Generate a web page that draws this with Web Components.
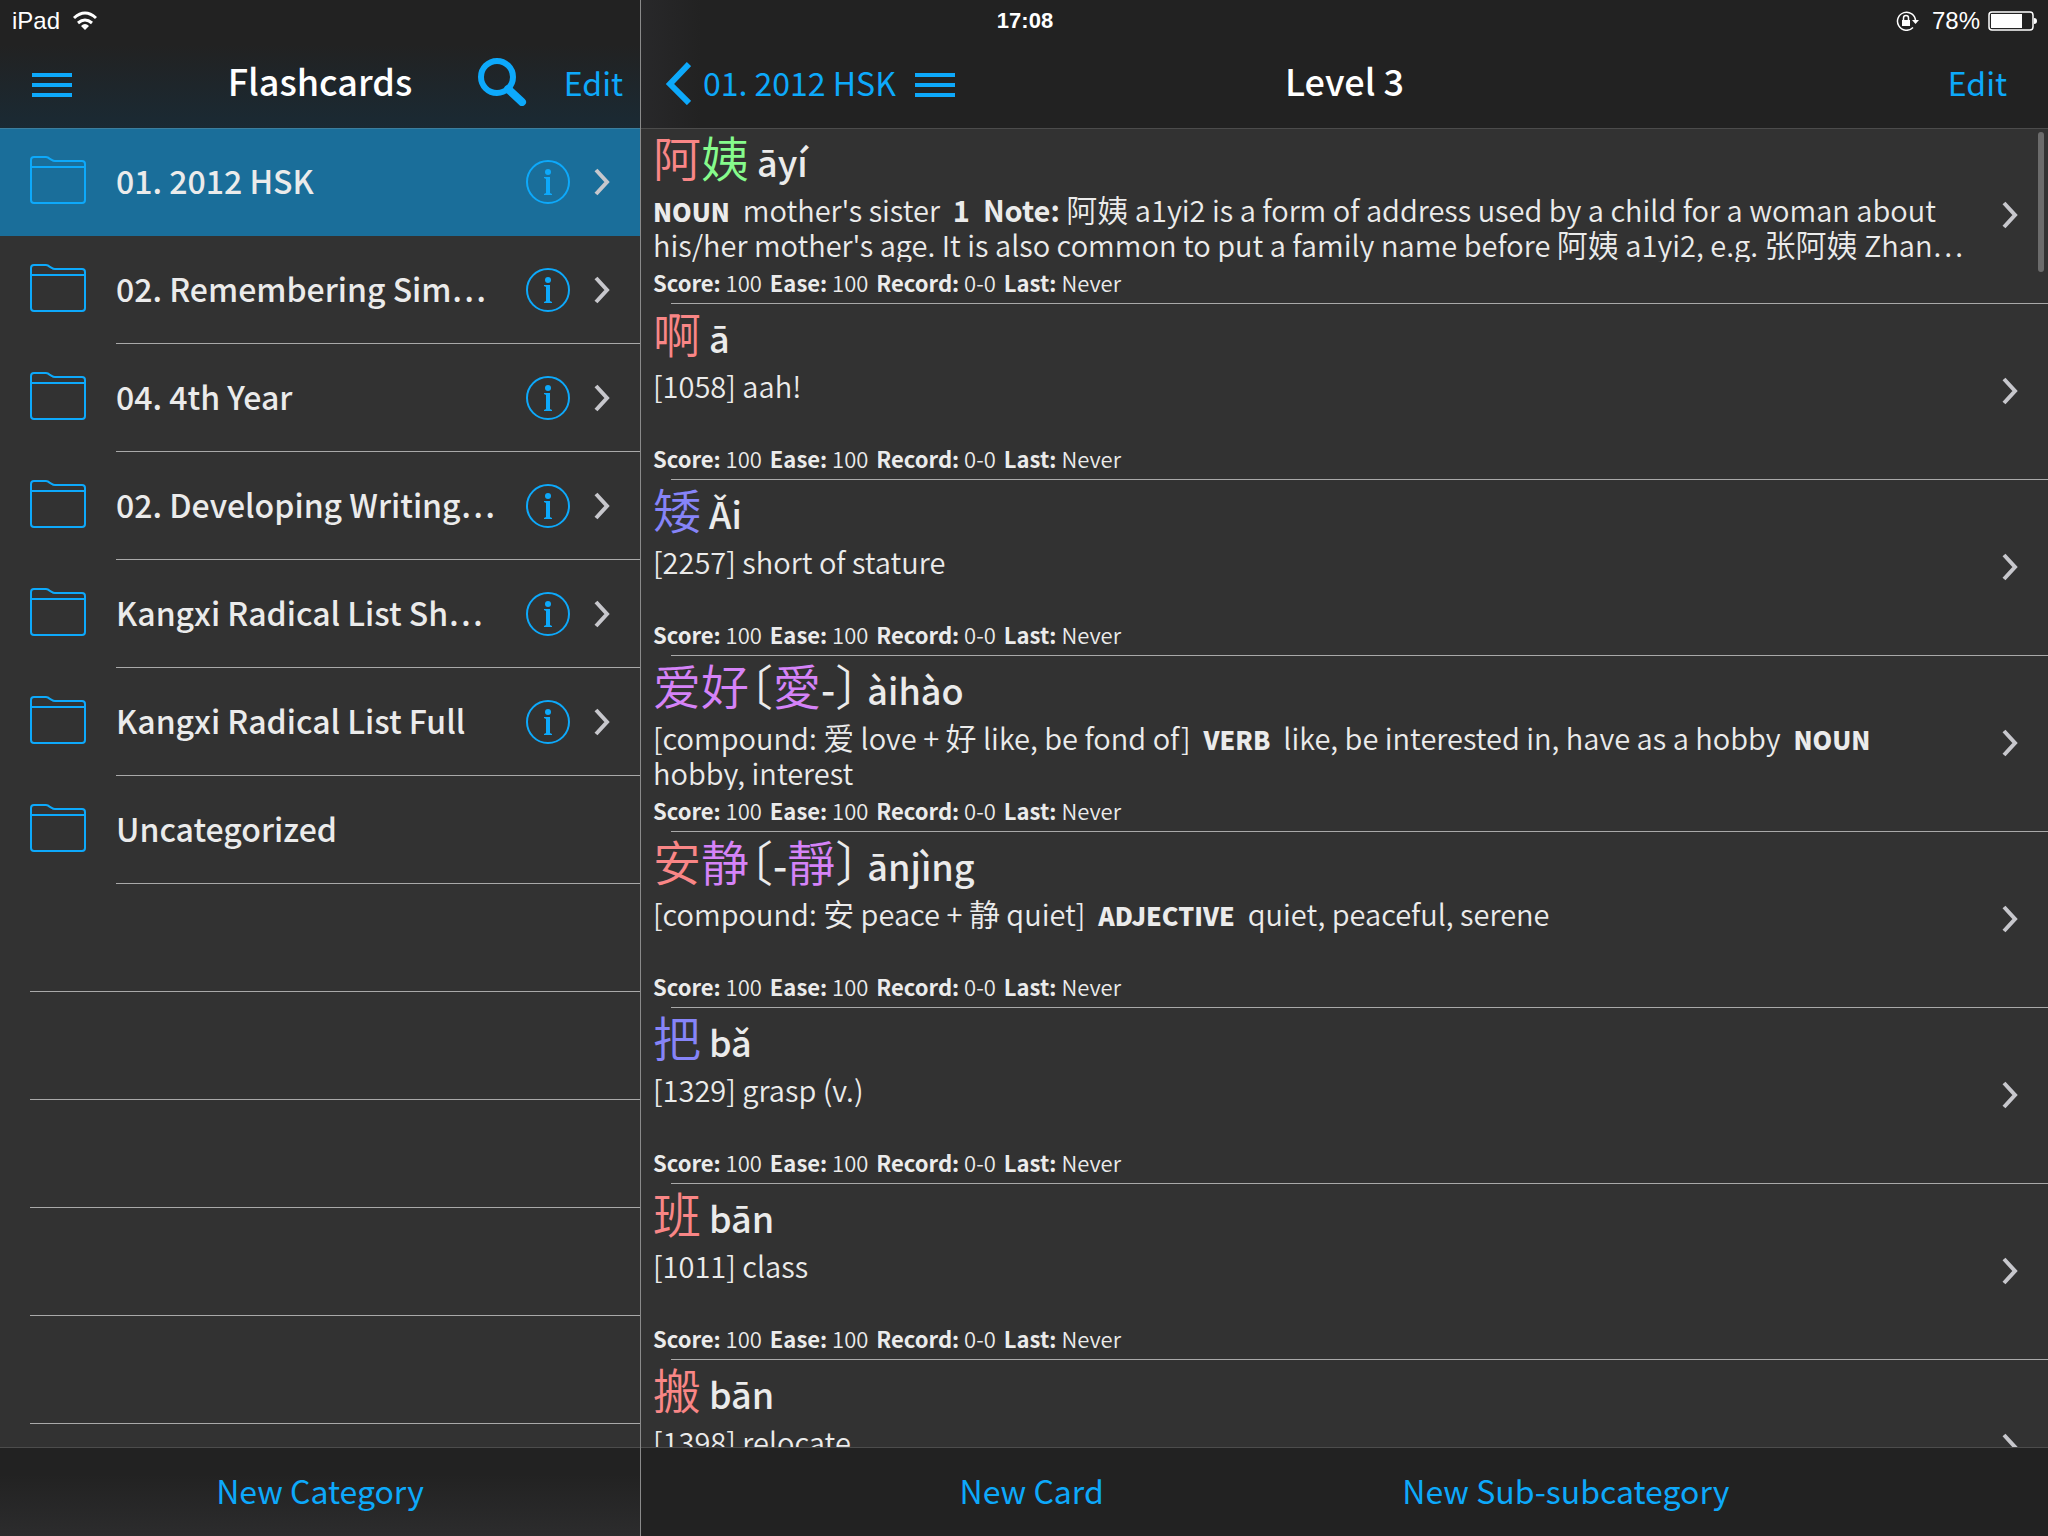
<!DOCTYPE html>
<html lang="en">
<head>
<meta charset="utf-8">
<title>Flashcards</title>
<style>
  html, body {
    height: 100%;
    margin: 0;
  }
  body {
    --bar: #222;
    --page: #323232;
    --blue: #0da9fb;
    --line: #a9a9a9;
    --bar-line: #4c4c4c;
    --text: #ebebeb;
    --tone1: #f98686;
    --tone2: #86fb8c;
    --tone3: #8684f8;
    --tone4: #d583f8;
    background: var(--page);
    color: var(--text);
    font-family: "Noto Sans CJK SC", sans-serif;
    overflow: hidden;
  }
</style>
</head>
<body>
<flash-app>
  <status-bar slot="status"></status-bar>

  <side-panel slot="side">
    <nav-bar slot="top" class="tinted">
      <icon-button slot="start" icon="menu" label="Menu"></icon-button>
      Flashcards
      <icon-button slot="end" icon="search" label="Search"></icon-button>
      <text-button slot="end">Edit</text-button>
    </nav-bar>
    <category-row selected>01. 2012 HSK</category-row>
    <category-row more>02. Remembering Sim</category-row>
    <category-row>04. 4th Year</category-row>
    <category-row more>02. Developing Writing</category-row>
    <category-row more>Kangxi Radical List Sh</category-row>
    <category-row>Kangxi Radical List Full</category-row>
    <category-row plain>Uncategorized</category-row>
    <empty-row></empty-row>
    <empty-row></empty-row>
    <empty-row></empty-row>
    <empty-row></empty-row>
    <empty-row></empty-row>
    <empty-row></empty-row>
    <tool-bar slot="bottom" class="glow">
      <text-button>New Category</text-button>
    </tool-bar>
  </side-panel>

  <card-panel slot="main">
    <nav-bar slot="top" class="wide">
      <back-button slot="start">01. 2012 HSK</back-button>
      <icon-button slot="start" icon="menu" label="Menu"></icon-button>
      Level 3
      <text-button slot="end">Edit</text-button>
    </nav-bar>
    <card-row pinyin="āyí">
      <span slot="hanzi" class="t1">阿</span><span slot="hanzi" class="t2">姨</span>
      <b class="pos">NOUN</b>&nbsp; mother's sister&nbsp; <b>1</b>&nbsp; <b>Note:</b> <span class="zh">阿姨</span> a1yi2 is a form of address used by a child for a woman about his/her mother's age. It is also common to put a family name before <span class="zh">阿姨</span> a1yi2, e.g. <span class="zh">张阿姨</span> Zhan<span class="dots">…</span>
    </card-row>
    <card-row pinyin="ā">
      <span slot="hanzi" class="t1">啊</span>
      [1058] aah!
    </card-row>
    <card-row pinyin="Ǎi">
      <span slot="hanzi" class="t3">矮</span>
      [2257] short of stature
    </card-row>
    <card-row pinyin="àihào">
      <span slot="hanzi" class="t4">爱好</span><span slot="hanzi">〔</span><span slot="hanzi" class="t4">愛</span><span slot="hanzi" class="dash">-</span><span slot="hanzi">〕</span>
      [compound: <span class="zh">爱</span> love + <span class="zh">好</span> like, be fond of]&nbsp; <b class="pos">VERB</b>&nbsp; like, be interested in, have as a hobby&nbsp; <b class="pos">NOUN</b>&nbsp; hobby, interest
    </card-row>
    <card-row pinyin="ānjìng">
      <span slot="hanzi" class="t1">安</span><span slot="hanzi" class="t4">静</span><span slot="hanzi">〔</span><span slot="hanzi" class="dash">-</span><span slot="hanzi" class="t4">靜</span><span slot="hanzi">〕</span>
      [compound: <span class="zh">安</span> peace + <span class="zh">静</span> quiet]&nbsp; <b class="pos">ADJECTIVE</b>&nbsp; quiet, peaceful, serene
    </card-row>
    <card-row pinyin="bǎ">
      <span slot="hanzi" class="t3">把</span>
      [1329] grasp (v.)
    </card-row>
    <card-row pinyin="bān">
      <span slot="hanzi" class="t1">班</span>
      [1011] class
    </card-row>
    <card-row pinyin="bān">
      <span slot="hanzi" class="t1">搬</span>
      [1398] relocate
    </card-row>
    <tool-bar slot="bottom">
      <text-button>New Card</text-button>
      <text-button>New Sub-subcategory</text-button>
    </tool-bar>
  </card-panel>
</flash-app>

<script>
const icons = {
  menu: `<svg width="40" height="30" viewBox="0 0 40 30" fill="currentColor"><path d="M0 6h40v4H0zM0 16h40v4H0zM0 26h40v4H0z"/></svg>`,
  search: `<svg width="50" height="48" viewBox="0 0 50 48" fill="none" stroke="currentColor"><circle cx="20" cy="19" r="16" stroke-width="6"/><path d="M31 31l14 13" stroke-width="8" stroke-linecap="round"/></svg>`,
  back: `<svg width="26" height="46" viewBox="0 0 26 46" fill="none" stroke="currentColor" stroke-width="6"><path d="M24 5L5 25l19 19"/></svg>`,
  chevron: `<svg width="18" height="28" viewBox="0 0 18 28" fill="none" stroke="currentColor" stroke-width="4"><path d="M2 2l11 12L2 26"/></svg>`,
  folder: `<svg width="56" height="48" viewBox="0 0 56 48" fill="none" stroke="currentColor" stroke-width="2"><path d="M1 4q0-3 3-3h12q2 0 4 2l2 1q1 1 3 1h27q3 0 3 3v36q0 3-3 3H4q-3 0-3-3zM1 11h54"/></svg>`,
  info: `<svg width="44" height="44" viewBox="0 0 44 44"><circle cx="22" cy="22" r="21" fill="none" stroke="currentColor" stroke-width="2"/><circle cx="22" cy="12" r="3" fill="currentColor"/><path fill="currentColor" d="M18 17h6v16l2 1v1h-8v-1l2-1V19l-2-1z"/></svg>`,
  wifi: `<svg width="26" height="20" viewBox="0 0 26 20" fill="none" stroke="currentColor" stroke-width="3"><path d="M2 7q11-10 22 0M6 12q7-6 14 0"/><path fill="currentColor" stroke="none" d="M13 19l-4-4q4-4 8 0z"/></svg>`,
  lock: `<svg width="28" height="20" viewBox="0 0 28 20" fill="none" stroke="currentColor"><path d="M17 16.500a9 9 0 1 1 2.500-6.500" stroke-width="1.500"/><path fill="currentColor" stroke="none" d="M16 9h7l-3.500 4zM6 9h8v6H6z"/><path d="M7.500 9V7q0-2.500 2.500-2.500T12.500 7v2" stroke-width="1.500"/></svg>`,
  battery: `<svg width="50" height="20" viewBox="0 0 50 20"><rect x="1" y="1" width="44" height="18" rx="3" fill="none" stroke="currentColor" stroke-width="1.500"/><path fill="currentColor" d="M3 3h31v14H3zM46 7q3 0 3 3t-3 3z"/></svg>`
};

class FlashElement extends HTMLElement {
  constructor() {
    super();
    this.attachShadow({mode:"open"});
  }
  connectedCallback() {
    this.shadowRoot.innerHTML = `<style>
      svg { display: block; flex: none; }
      button { all: unset; box-sizing: border-box; cursor: pointer; }
      ${this.constructor.styles}
    </style>${this.render()}`;
  }
}

class FlashApp extends FlashElement {
  static get styles() {
    return /*css*/ `
      :host {
        display: grid;
        grid-template-columns: minmax(0, 5fr) minmax(0, 11fr);
        height: 100vh;
        position: relative;
      }
      ::slotted(status-bar) {
        position: absolute;
        inset: 0 0 auto 0;
        z-index: 2;
      }
    `;
  }
  render() {
    return /*html*/ `<slot name="side"></slot><slot name="main"></slot><slot name="status"></slot>`;
  }
}
customElements.define('flash-app', FlashApp);

class StatusBar extends FlashElement {
  static get styles() {
    return /*css*/ `
      :host {
        display: grid;
        grid-template-columns: 1fr auto 1fr;
        align-items: center;
        height: 42px;
        padding: 0 10px 0 12px;
        color: #fff;
        font: 24px "Liberation Sans", sans-serif;
      }
      div { display: flex; align-items: center; gap: 12px; }
      .right { justify-content: flex-end; gap: 8px; }
      b { font-size: 22px; }
    `;
  }
  render() {
    return /*html*/ `
      <div><span>iPad</span>${icons.wifi}</div>
      <b>17:08</b>
      <div class="right">${icons.lock}<span>78%</span>${icons.battery}</div>`;
  }
}
customElements.define('status-bar', StatusBar);

// both panels share the bar / list / bar column
const panel = /*css*/ `
  :host {
    display: flex;
    flex-direction: column;
    min-height: 0;
    position: relative;
  }
  .list {
    flex: 1;
    min-height: 0;
    overflow: hidden;
    position: relative;
  }
`;

class SidePanel extends FlashElement {
  static get styles() {
    return panel;
  }
  render() {
    return /*html*/ `<slot name="top"></slot><div class="list"><slot></slot></div><slot name="bottom"></slot>`;
  }
}
customElements.define('side-panel', SidePanel);

class CardPanel extends FlashElement {
  static get styles() {
    return /*css*/ `
      ${panel}
      :host { border-left: 1px solid #8a8a8a; }
      .thumb {
        position: absolute;
        top: 4px;
        right: 4px;
        width: 6px;
        height: 140px;
        border-radius: 3px;
        background: #6b6b6b;
      }
    `;
  }
  render() {
    return /*html*/ `<slot name="top"></slot><div class="list"><slot></slot><div class="thumb"></div></div><slot name="bottom"></slot>`;
  }
}
customElements.define('card-panel', CardPanel);

class NavBar extends FlashElement {
  static get styles() {
    return /*css*/ `
      :host {
        display: grid;
        grid-template-columns: 1fr auto 1fr;
        align-items: center;
        box-sizing: border-box;
        height: 128px;
        padding: 40px 17px 4px;
        background: var(--bar);
        box-shadow: 0 1px 0 var(--bar-line);
        position: relative;
        z-index: 1;
      }
      :host(.tinted) {
        background: linear-gradient(#222 35%, #1a2a34);
        box-shadow: 0 1px 0 #3b7f9f;
      }
      :host(.wide) {
        padding: 40px 24px 4px;
        background: linear-gradient(90deg, #28282a, var(--bar) 60px);
      }
      h1 {
        margin: 0;
        padding-bottom: 4px;
        color: #fff;
        font-size: 36px;
        font-weight: 500;
        line-height: 80px;
      }
      div { display: flex; align-items: center; gap: 19px; }
      .start { padding-left: 15px; }
      :host(.wide) .start { padding-left: 0; }
      .end { justify-content: flex-end; gap: 37px; }
      :host(.wide) .end { padding-right: 17px; }
    `;
  }
  render() {
    return /*html*/ `
      <div class="start"><slot name="start"></slot></div>
      <h1><slot></slot></h1>
      <div class="end"><slot name="end"></slot></div>`;
  }
}
customElements.define('nav-bar', NavBar);

class ToolBar extends FlashElement {
  static get styles() {
    return /*css*/ `
      :host {
        display: flex;
        justify-content: space-evenly;
        align-items: center;
        box-sizing: border-box;
        height: 88px;
        padding: 0 20px 4px;
        background: var(--bar);
        box-shadow: 0 -1px 0 var(--bar-line);
        position: relative;
        z-index: 1;
      }
      :host(.glow) { background: linear-gradient(#222 30%, #2c2c2d); }
    `;
  }
  render() {
    return /*html*/ `<slot></slot>`;
  }
}
customElements.define('tool-bar', ToolBar);

class TextButton extends FlashElement {
  static get styles() {
    return /*css*/ `
      :host { display: block; color: var(--blue); }
      button { display: block; font-size: 32px; line-height: 48px; }
    `;
  }
  render() {
    return /*html*/ `<button type="button"><slot></slot></button>`;
  }
}
customElements.define('text-button', TextButton);

class IconButton extends FlashElement {
  static get styles() {
    return /*css*/ `
      :host { display: block; color: var(--blue); }
      button { display: block; }
    `;
  }
  render() {
    return /*html*/ `<button type="button" aria-label="${this.getAttribute('label')}">${icons[this.getAttribute('icon')]}</button>`;
  }
}
customElements.define('icon-button', IconButton);

class BackButton extends FlashElement {
  static get styles() {
    return /*css*/ `
      :host { display: block; color: var(--blue); }
      button { display: flex; align-items: center; gap: 12px; font-size: 32px; line-height: 48px; }
    `;
  }
  render() {
    return /*html*/ `<button type="button">${icons.back}<span><slot></slot></span></button>`;
  }
}
customElements.define('back-button', BackButton);

class CategoryRow extends FlashElement {
  static get styles() {
    return /*css*/ `
      :host {
        display: grid;
        grid-template-columns: 56px minmax(0, 1fr);
        align-items: center;
        gap: 30px;
        height: 108px;
        padding-left: 30px;
      }
      :host([selected]) { background: #1a6e9a; }
      :host([selected]) .body { border-color: transparent; }
      .body {
        display: flex;
        align-items: center;
        box-sizing: border-box;
        height: 108px;
        padding-right: 28px;
        border-bottom: 1px solid var(--line);
      }
      .folder { padding-bottom: 4px; color: var(--blue); }
      .name {
        flex: 1;
        min-width: 0;
        padding-bottom: 4px;
        font-size: 32px;
        font-weight: 500;
        line-height: 48px;
        white-space: nowrap;
      }
      .dots { font-feature-settings: "pwid"; }
      .info { color: var(--blue); margin-right: 24px; }
      .chevron { color: #c7c7cc; }
    `;
  }
  render() {
    const dots = this.hasAttribute('more') ? '<span class="dots">…</span>' : '';
    const tools = this.hasAttribute('plain') ? '' : `
        <button type="button" class="info" aria-label="Info">${icons.info}</button>
        <span class="chevron">${icons.chevron}</span>`;
    return /*html*/ `
      <span class="folder">${icons.folder}</span>
      <div class="body">
        <button type="button" class="name"><slot></slot>${dots}</button>${tools}
      </div>`;
  }
}
customElements.define('category-row', CategoryRow);

class EmptyRow extends FlashElement {
  static get styles() {
    return /*css*/ `
      :host {
        display: block;
        box-sizing: border-box;
        height: 108px;
        margin-left: 30px;
        border-bottom: 1px solid var(--line);
      }
    `;
  }
  render() {
    return '';
  }
}
customElements.define('empty-row', EmptyRow);

class CardRow extends FlashElement {
  static get styles() {
    return /*css*/ `
      :host {
        display: grid;
        grid-template-columns: minmax(0, 1fr) auto;
        align-items: center;
        box-sizing: border-box;
        height: 176px;
        padding: 0 28px 2px 12px;
        background: linear-gradient(var(--line), var(--line)) 30px 100% / 100% 1px no-repeat;
      }
      h2 {
        margin: 0 0 8px;
        font-size: 48px;
        font-weight: 350;
        line-height: 56px;
        font-feature-settings: "halt";
        white-space: nowrap;
      }
      h2 span {
        margin-left: 8px;
        font-size: 36px;
        font-weight: 500;
        line-height: 1;
      }
      .meaning {
        height: 70px;
        margin: 0;
        padding-right: 30px;
        overflow: hidden;
        font-size: 29px;
        font-weight: 350;
        line-height: 35px;
      }
      .stats {
        margin: 0;
        font-size: 22px;
        font-weight: 350;
        line-height: 40px;
      }
      b { font-weight: 700; }
      .stats span { margin-right: 8px; }
      .chevron { color: #c7c7cc; }
      ::slotted(.t1) { color: var(--tone1); }
      ::slotted(.t2) { color: var(--tone2); }
      ::slotted(.t3) { color: var(--tone3); }
      ::slotted(.t4) { color: var(--tone4); }
      ::slotted(.dash) { font-size: 40px; font-weight: 500; line-height: 1; }
      ::slotted(b) { font-weight: 700; }
      ::slotted(.zh) { font-size: 31px; line-height: 1; }
      ::slotted(.pos) { font-size: 25px; font-weight: 900; line-height: 1; }
      ::slotted(.dots) { font-feature-settings: "pwid"; }
    `;
  }
  render() {
    return /*html*/ `
      <div>
        <h2><slot name="hanzi"></slot><span>${this.getAttribute('pinyin')}</span></h2>
        <p class="meaning"><slot></slot></p>
        <p class="stats"><span><b>Score:</b> 100</span><span><b>Ease:</b> 100</span><span><b>Record:</b> 0-0</span><span><b>Last:</b> Never</span></p>
      </div>
      <span class="chevron">${icons.chevron}</span>`;
  }
}
customElements.define('card-row', CardRow);
</script>
</body>
</html>
